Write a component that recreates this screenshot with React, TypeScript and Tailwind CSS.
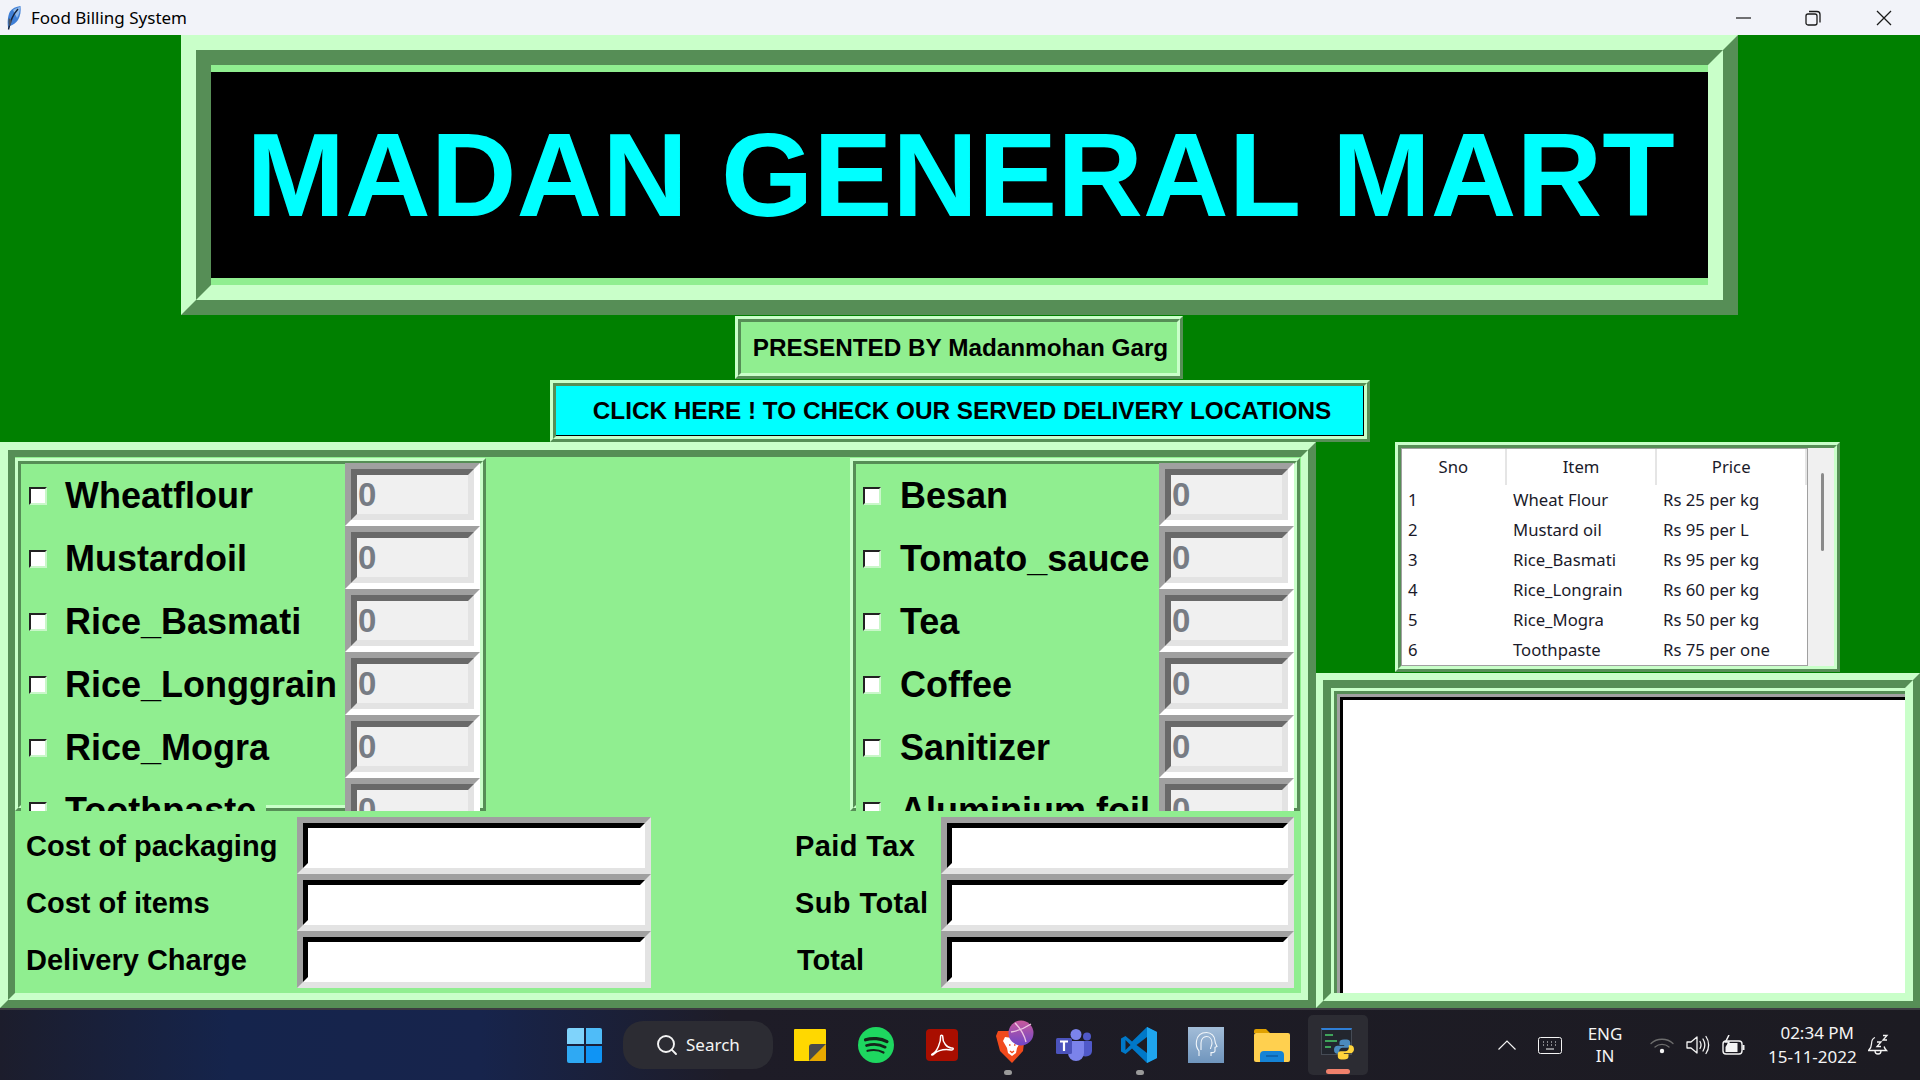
import { Search } from 'lucide-react';

const leftItems = ['Wheatflour', 'Mustardoil', 'Rice_Basmati', 'Rice_Longgrain', 'Rice_Mogra', 'Toothpaste'];
const rightItems = ['Besan', 'Tomato_sauce', 'Tea', 'Coffee', 'Sanitizer', 'Aluminium foil'];

const priceRows = [
  ['1', 'Wheat Flour', 'Rs 25 per kg'],
  ['2', 'Mustard oil', 'Rs 95 per L'],
  ['3', 'Rice_Basmati', 'Rs 95 per kg'],
  ['4', 'Rice_Longrain', 'Rs 60 per kg'],
  ['5', 'Rice_Mogra', 'Rs 50 per kg'],
  ['6', 'Toothpaste', 'Rs 75 per one'],
];

const uiFont = 'font-["Noto_Sans","Open_Sans",sans-serif]';

// Tk "ridge" relief: light then dark on the top/left, the other way round on the bottom/right
function ThinRidge({ className = '', children }: { className?: string; children?: React.ReactNode }) {
  return (
    <div className={`border-[3px] border-t-[#c9ffc9] border-l-[#c9ffc9] border-b-[#568e56] border-r-[#568e56] ${className}`}>
      <div className="h-full w-full border-[3px] border-t-[#568e56] border-l-[#568e56] border-b-[#c9ffc9] border-r-[#c9ffc9]">
        {children}
      </div>
    </div>
  );
}

function ItemEntry() {
  return (
    <div className="ml-auto h-[63px] w-[135px] shrink-0 border-[6px] border-t-[#a0a0a0] border-l-[#a0a0a0] border-b-white border-r-white">
      <div className="h-full border-[6px] border-t-[#696969] border-l-[#696969] border-b-[#e3e3e3] border-r-[#e3e3e3] bg-[#f0f0f0] pl-[1px] text-[33px] leading-[40px] font-bold text-[#777c84]">
        0
      </div>
    </div>
  );
}

function ItemRow({ label, check }: { label: string; check: string }) {
  return (
    <div className="flex h-[63px] items-start">
      <div className={`mt-[2px] flex h-[61px] min-w-0 items-center bg-[#90ee90] pr-[10px] ${check}`}>
        <div className="h-[18px] w-[18px] shrink-0 border-2 border-t-[#222222] border-l-[#222222] border-b-[#c9f7c9] border-r-[#c9f7c9] bg-white" />
        <span className="text-[36px] font-bold leading-none whitespace-nowrap text-black">{label}</span>
      </div>
      <ItemEntry />
    </div>
  );
}

function ItemFrame({ items, width, rowWidth, check }: { items: string[]; width: string; rowWidth: string; check: string }) {
  return (
    <div className={`relative h-[353px] overflow-hidden ${width}`}>
      <ThinRidge className="absolute inset-0" />
      <div className={`relative pt-[5px] pl-[6px] ${rowWidth}`}>
        {items.map((item) => (
          <ItemRow key={item} label={item} check={check} />
        ))}
      </div>
    </div>
  );
}

function TotalEntry({ width }: { width: string }) {
  return (
    <div className={`h-[57px] shrink-0 border-[6px] border-t-[#a0a0a0] border-l-[#a0a0a0] border-b-[#e3e3e3] border-r-[#e3e3e3] ${width}`}>
      <div className="h-full border-[5px] border-t-black border-l-black border-b-white border-r-white bg-white" />
    </div>
  );
}

function TotalRow({ left, right, rightClass }: { left: string; right: string; rightClass: string }) {
  return (
    <div className="flex h-[57px] items-center text-[29px] font-bold text-black">
      <div className="w-[282px] shrink-0 pt-[2px] pl-[11px]">{left}</div>
      <TotalEntry width="w-[354px]" />
      <div className="w-[145px] shrink-0" />
      <div className={`shrink-0 pt-[2px] ${rightClass}`}>{right}</div>
      <TotalEntry width="w-[353px]" />
    </div>
  );
}

function TitleBar() {
  return (
    <div className={`flex h-[35px] shrink-0 items-center bg-[#f2f3f9] text-black ${uiFont}`}>
      <svg viewBox="0 0 14 24" className="ml-[7px] h-[24px] w-[14px]">
        <path d="M1.500 23.500 C0 18 0.500 10 3 5.500 C5 2.500 9 0.500 13.500 0 C14 5 13.500 10 11 14 C9 17 6 19 3 20 Z" fill="#3f7fd6" />
        <path d="M6 4 C8 2.500 10.500 1.500 13 1 C13 5 12 9 10 12 Z" fill="#8fb8ea" />
        <path d="M1.500 23.500 C3 16 5.500 9 11 3" stroke="#16223c" strokeWidth="1.400" fill="none" />
        <path d="M3 20 C1.500 20.500 1 16 1.800 12 L5 15 Z" fill="#4a5668" />
      </svg>
      <span className="ml-[10px] text-[17px]">Food Billing System</span>
      <div className="ml-auto flex items-center">
        <svg viewBox="0 0 15 15" className="mr-[54px] h-[15px] w-[15px]">
          <path d="M0 8h15" stroke="#1a1a1a" strokeWidth="1.200" />
        </svg>
        <svg viewBox="0 0 16 16" className="mr-[55px] h-[16px] w-[16px]" fill="none" stroke="#1a1a1a" strokeWidth="1.300">
          <rect x="1" y="4" width="11" height="11" rx="2" />
          <path d="M4 1.500h8a3 3 0 0 1 3 3v8" />
        </svg>
        <svg viewBox="0 0 16 16" className="mr-[28px] h-[16px] w-[16px]" stroke="#1a1a1a" strokeWidth="1.300">
          <path d="M1 1l14 14M15 1L1 15" />
        </svg>
      </div>
    </div>
  );
}

function WindowsLogo() {
  return (
    <div className="grid h-[35px] w-[35px] grid-cols-2 gap-[2px]">
      <div className="rounded-tl-[2px] bg-[#7fd3fb]" />
      <div className="rounded-tr-[2px] bg-[#4fbcf8]" />
      <div className="rounded-bl-[2px] bg-[#2fa9f3]" />
      <div className="rounded-br-[2px] bg-[#0f94f5]" />
    </div>
  );
}

function StickyIcon() {
  return (
    <svg viewBox="0 0 32 32" className="h-[32px] w-[32px]">
      <path d="M1 0h30a1 1 0 0 1 1 1v19L20 32H1a1 1 0 0 1-1-1V1a1 1 0 0 1 1-1z" fill="#ffd800" />
      <path d="M32 15v16a1 1 0 0 1-1 1H15z" fill="#e8a900" />
      <path d="M15 32V18a3 3 0 0 1 3-3h14z" fill="#4a4a4a" />
    </svg>
  );
}

function SpotifyIcon() {
  return (
    <svg viewBox="0 0 36 36" className="h-[36px] w-[36px]">
      <circle cx="18" cy="18" r="18" fill="#1ed760" />
      <g fill="none" stroke="#14241a" strokeLinecap="round">
        <path d="M7.500 12.800C14 10.800 23 11.300 29 14.600" strokeWidth="3.200" />
        <path d="M8.500 18.500C14.500 16.800 22 17.300 27.200 20.200" strokeWidth="2.700" />
        <path d="M9.500 23.800C14.500 22.600 21 23 25.500 25.500" strokeWidth="2.200" />
      </g>
    </svg>
  );
}

function AcrobatIcon() {
  return (
    <svg viewBox="0 0 32 32" className="h-[32px] w-[32px]">
      <rect width="32" height="32" rx="4" fill="#a90e00" />
      <path d="M6.500 25C11 23 15 13 14.600 7.500C14.400 5.600 17 5.600 16.800 8C16.400 13 21 19.500 26 19C28 18.800 27.500 21.500 25 21C19 20 12 21.500 8 25C6.200 26.600 4.800 26 6.500 25Z" fill="none" stroke="#fff" strokeWidth="1.500" />
    </svg>
  );
}

function BraveIcon() {
  return (
    <div className="relative h-[44px] w-[40px]">
      <svg viewBox="0 0 36 32" className="absolute top-[11px] left-0 h-[32px] w-[36px]">
        <path d="M4 0h22l5 4-2 16-11 12L6 20 2 5z" fill="#f14a1c" />
        <path d="M11 6l7 1 6-1 3 4-4 7-1 5-4 3-4-3-1-5-4-7z" fill="#fff" />
        <path d="M15 14h1.500M20 14h1.500M16 20l2 1.500 2-1.500" stroke="#f14a1c" strokeWidth="1.400" fill="none" />
      </svg>
      <svg viewBox="0 0 26 26" className="absolute top-0 left-[14px] h-[26px] w-[26px]">
        <defs>
          <linearGradient id="braveOrb" x1="0" y1="0" x2="0" y2="1">
            <stop offset="0" stopColor="#c85a9c" />
            <stop offset="1" stopColor="#6e46c8" />
          </linearGradient>
        </defs>
        <circle cx="13" cy="13" r="12.500" fill="url(#braveOrb)" />
        <path d="M3 12C9 11 17 8 23 4M7 3c4 4 9 11 11 19" stroke="#eec6e2" strokeWidth="1.300" fill="none" />
      </svg>
    </div>
  );
}

function TeamsIcon() {
  return (
    <svg viewBox="0 0 36 32" className="h-[32px] w-[36px]">
      <circle cx="20" cy="5.500" r="5.500" fill="#7b83eb" />
      <circle cx="31" cy="7.500" r="4" fill="#5059c9" />
      <path d="M26 12h9a1 1 0 0 1 1 1v9a6 6 0 0 1-10 4z" fill="#5059c9" />
      <path d="M12 12h15a1 1 0 0 1 1 1v11a8 8 0 0 1-16 0z" fill="#7b83eb" />
      <rect x="0" y="9" width="16" height="16" rx="1.500" fill="#4b53bc" />
      <path d="M4 12.500h8M8 12.500v9.500" stroke="#fff" strokeWidth="2.200" />
    </svg>
  );
}

function VsCodeIcon() {
  return (
    <svg viewBox="0 0 36 36" className="h-[36px] w-[36px]">
      <path d="M26 0l10 5v26l-10 5-15-14.500L4.500 27 0 24.500V11.500L4.500 9l6.500 5.500z" fill="#0078c8" />
      <path d="M26 0l10 5v26l-10 5z" fill="#1fa5ee" />
      <path d="M26 10l-10.500 8L26 26z" fill="#1e1c24" />
      <path d="M4.500 13l5 5-5 5z" fill="#1e1c24" />
    </svg>
  );
}

function FaceAppIcon() {
  return (
    <div className="flex h-[36px] w-[36px] items-center justify-center bg-gradient-to-b from-[#a3bdd8] to-[#6f95bd]">
      <svg viewBox="0 0 24 28" className="h-[28px] w-[24px]" fill="none" stroke="#f2f6fa" strokeWidth="1.100">
        <path d="M5 25v-5C2.500 17 2 13 2.500 10 3.500 4 8 1.500 12.500 1.500S21 5 21 10c0 2 1 3.500 2 5.500l-2 .8v3.500c0 1.500-1.500 2-4 1.700V25" />
        <path d="M7 19V12c0-4 2.500-6.500 5.500-6.500S18 8 18 12c0 3-1.500 4-1.500 6" />
      </svg>
    </div>
  );
}

function FolderIcon() {
  return (
    <svg viewBox="0 0 36 33" className="h-[33px] w-[36px]">
      <path d="M0 2a2 2 0 0 1 2-2h10l4 4h-16z" fill="#e0a100" />
      <rect y="4" width="36" height="29" rx="2" fill="#ffd04f" />
      <path d="M6 33v-7a4 4 0 0 1 4-4h16a4 4 0 0 1 4 4v7z" fill="#1583d6" />
      <path d="M12 27h12" stroke="#0c5fa8" strokeWidth="1.600" />
    </svg>
  );
}

function PythonWindowIcon() {
  const snake = 'M11.900 2C9 2 7.500 3 7.500 5v2.500h4.700v.8H5.500C3.500 8.300 2 9.800 2 12.200s1.400 4 3.400 4h1.800v-2.500c0-2 1.600-3.500 3.500-3.500h4.600c1.600 0 2.900-1.300 2.900-2.900V5c0-1.700-1.600-3-3.400-3z';
  return (
    <div className="relative h-[34px] w-[35px]">
      <div className="absolute top-0 left-0 h-[27px] w-[31px] border border-t-2 border-[#454b55] border-t-[#2f7fd6] bg-[#22262e]">
        <div className="mt-[4px] ml-[3px] h-[2px] w-[8px] bg-[#3fa35a]" />
        <div className="mt-[4px] ml-[3px] h-[2px] w-[12px] bg-[#3fa35a]" />
        <div className="mt-[4px] ml-[3px] h-[2px] w-[6px] bg-[#3fa35a]" />
      </div>
      <svg viewBox="0 0 24 24" className="absolute top-[9px] left-[11px] h-[25px] w-[24px]">
        <path d={snake} fill="#4b8bbe" />
        <path d={snake} fill="#ffd43b" transform="rotate(180 12 12)" />
      </svg>
    </div>
  );
}

function Tray() {
  return (
    <div className={`ml-auto flex h-full items-center text-[#f4f4f4] ${uiFont}`}>
      <svg viewBox="0 0 18 10" className="h-[10px] w-[18px]" fill="none" stroke="#f4f4f4" strokeWidth="1.200">
        <path d="M.5 9.500L9 1l8.500 8.500" />
      </svg>
      <svg viewBox="0 0 24 17" className="ml-[22px] h-[17px] w-[24px]" fill="none" stroke="#f4f4f4" strokeWidth="1">
        <rect x="0.500" y="0.500" width="23" height="16" rx="2" />
        <path d="M5 5h1M9 5h1M13 5h1M17 5h1M5 8h1M9 8h1M13 8h1M17 8h1M8 12h8" />
      </svg>
      <div className="ml-[24px] w-[38px] text-center text-[17px] leading-[22px]">
        <div>ENG</div>
        <div>IN</div>
      </div>
      <svg viewBox="0 0 24 17" className="ml-[26px] h-[17px] w-[24px]" fill="none" strokeLinecap="round">
        <path d="M1 6.500C7 .8 17 .8 23 6.500" stroke="#6d6d6d" strokeWidth="1.300" />
        <path d="M5 10c4-3.500 10-3.500 14 0" stroke="#6d6d6d" strokeWidth="1.300" />
        <circle cx="12" cy="14" r="2.200" fill="#f4f4f4" />
      </svg>
      <svg viewBox="0 0 24 20" className="ml-[12px] h-[20px] w-[24px]" fill="none" stroke="#f4f4f4" strokeWidth="1.300" strokeLinecap="round">
        <path d="M1 7h4l6-5v16l-6-5H1z" strokeLinejoin="round" />
        <path d="M14 6.500c1.300 2.200 1.300 4.800 0 7M17 4c2.300 3.800 2.300 8.200 0 12M20 1.500c3.500 5 3.500 12 0 17" />
      </svg>
      <svg viewBox="0 0 24 21" className="ml-[12px] h-[21px] w-[24px]" fill="none" stroke="#f4f4f4" strokeWidth="1.400">
        <rect x="1" y="6" width="19" height="13" rx="3" />
        <path d="M21.500 10v5" strokeWidth="2" />
        <path d="M6 8h9.500v9H3.500V12z" fill="#f4f4f4" stroke="none" />
        <path d="M7 0L3.500 7H7l-2 5" strokeWidth="1.500" />
      </svg>
      <div className="ml-[22px] w-[86px] text-right text-[17px] leading-[24px]">
        <div>02:34 PM</div>
        <div className="whitespace-nowrap">15-11-2022</div>
      </div>
      <svg viewBox="0 0 21 22" className="mr-[31px] ml-[14px] h-[22px] w-[21px]" fill="none" stroke="#f4f4f4" strokeWidth="1.300">
        <path d="M7 3.500C4 4.500 3.500 7 3.500 10c0 3-1.500 5-3 6.500h18c-1-1-2-2-2.400-4M7 17c0 4 6 4 6 0" />
        <path d="M9 8h4l-4 4.500h4M15 1.500h4l-4 4.500h4" />
      </svg>
    </div>
  );
}

function Taskbar() {
  return (
    <div className="flex h-[72px] shrink-0 items-center border-t-2 border-t-[#3b3b40] bg-[linear-gradient(90deg,#1c1d2c_0%,#15244c_12%,#17244c_25%,#1e1c27_38%,#1c1b22_100%)]">
      <div className="ml-[567px]">
        <WindowsLogo />
      </div>
      <div className={`ml-[21px] flex h-[48px] w-[150px] items-center rounded-[20px] bg-[#2c2c33] pl-[32px] text-[17px] text-[#f4f4f4] ${uiFont}`}>
        <Search className="h-[24px] w-[24px]" strokeWidth={1.900} />
        <span className="ml-[7px]">Search</span>
      </div>
      <div className="ml-[21px]"><StickyIcon /></div>
      <div className="ml-[32px]"><SpotifyIcon /></div>
      <div className="ml-[32px]"><AcrobatIcon /></div>
      <div className="relative ml-[36px] -mt-[7px]">
        <BraveIcon />
        <div className="absolute top-[50px] left-[10px] h-[5px] w-[8px] rounded-full bg-[#9a9a9a]" />
      </div>
      <div className="ml-[22px]"><TeamsIcon /></div>
      <div className="relative ml-[29px]">
        <VsCodeIcon />
        <div className="absolute top-[43px] left-[15px] h-[5px] w-[8px] rounded-full bg-[#9a9a9a]" />
      </div>
      <div className="ml-[31px]"><FaceAppIcon /></div>
      <div className="ml-[30px]"><FolderIcon /></div>
      <div className="relative ml-[18px] flex h-[60px] w-[60px] items-center justify-center rounded-[5px] bg-[#2c2c33]">
        <PythonWindowIcon />
        <div className="absolute bottom-[1px] left-[18px] h-[5px] w-[24px] rounded-full bg-[#f0816c]" />
      </div>
      <Tray />
    </div>
  );
}

function PriceList() {
  return (
    <div className={`ml-[79px] h-[230px] w-[445px] shrink-0 ${uiFont}`}>
      <ThinRidge className="h-full w-full">
        <div className="flex h-full">
          <div className="h-full w-[407px] overflow-hidden border border-[#a0a0a0] bg-white text-[16.700px] text-[#1a1a2a]">
            <div className="flex h-[36px] text-center">
              <div className="w-[105px] border-r-2 border-r-[#e5e5e5] leading-[36px]">Sno</div>
              <div className="w-[151px] border-r-2 border-r-[#e5e5e5] leading-[36px]">Item</div>
              <div className="w-[150px] border-r-2 border-r-[#e5e5e5] leading-[36px]">Price</div>
            </div>
            {priceRows.map((row) => (
              <div key={row[0]} className="flex h-[30px] items-center whitespace-nowrap">
                <div className="w-[111px] pl-[6px]">{row[0]}</div>
                <div className="w-[150px]">{row[1]}</div>
                <div>{row[2]}</div>
              </div>
            ))}
          </div>
          <div className="flex-1 bg-[#f0f0f0] pt-[25px] pl-[13px]">
            <div className="h-[78px] w-[3px] rounded-full bg-[#8a8a8a]" />
          </div>
        </div>
      </ThinRidge>
    </div>
  );
}

export default function App() {
  return (
    <div className='flex h-[1080px] w-[1920px] flex-col overflow-hidden font-["Liberation_Sans",Arial,sans-serif]'>
      <TitleBar />

      <div className="flex h-[973px] shrink-0 flex-col bg-[#008000]">
        {/* Shop name banner */}
        <div className="ml-[181px] h-[280px] w-[1557px] shrink-0 border-[15px] border-t-[#c9ffc9] border-l-[#c9ffc9] border-b-[#568e56] border-r-[#568e56]">
          <div className="h-full border-[15px] border-t-[#568e56] border-l-[#568e56] border-b-[#c9ffc9] border-r-[#c9ffc9] bg-[#90ee90] py-[7px]">
            <div className="flex h-full items-center justify-center bg-black pl-[2px] text-[118.700px] font-bold whitespace-nowrap text-[#00ffff]">
              MADAN GENERAL MART
            </div>
          </div>
        </div>

        <ThinRidge className="mt-px ml-[735px] h-[63px] w-[448px] shrink-0">
          <div className="flex h-full items-center justify-center bg-[#90ee90] pt-[2px] pl-[3px] text-[24.300px] font-bold text-black">
            PRESENTED BY Madanmohan Garg
          </div>
        </ThinRidge>

        <ThinRidge className="mt-px ml-[550px] h-[62px] w-[820px] shrink-0">
          <div className="flex h-full items-center justify-center border-r border-b border-r-black border-b-black bg-[#00ffff] pt-[2px] pl-[5px] text-[24.300px] font-bold text-black">
            CLICK HERE ! TO CHECK OUR SERVED DELIVERY LOCATIONS
          </div>
        </ThinRidge>

        <div className="flex h-[566px] shrink-0">
          {/* Item entry and totals panel */}
          <div className="h-full w-[1316px] shrink-0 border-[8px] border-t-[#c9ffc9] border-l-[#c9ffc9] border-b-[#568e56] border-r-[#568e56]">
            <div className="h-full border-[7px] border-t-[#568e56] border-l-[#568e56] border-b-[#c9ffc9] border-r-[#c9ffc9] bg-[#90ee90]">
              <div className="flex justify-between pt-px pr-px">
                <ItemFrame items={leftItems} width="w-[471px]" rowWidth="w-[465px]" check="gap-[18px] pl-[8px]" />
                <ItemFrame items={rightItems} width="w-[450px]" rowWidth="w-[444px]" check="gap-[19px] pl-[7px]" />
              </div>
              <div className="pt-[6px]">
                <TotalRow left="Cost of packaging" right="Paid Tax" rightClass="-ml-[1px] w-[146px] tracking-[0.4px]" />
                <TotalRow left="Cost of items" right="Sub Total" rightClass="-ml-[1px] w-[146px] tracking-[0.4px]" />
                <TotalRow left="Delivery Charge" right="Total" rightClass="w-[145px] pl-px" />
              </div>
            </div>
          </div>

          <div className="flex min-w-0 flex-1 flex-col">
            <PriceList />
            {/* Bill area */}
            <div className="mt-px h-[335px] min-w-0 shrink-0 border-[7px] border-t-[#c9ffc9] border-l-[#c9ffc9] border-b-[#568e56] border-r-[#568e56]">
              <div className="h-full overflow-hidden border-[8px] border-t-[#568e56] border-l-[#568e56] border-b-[#c9ffc9] border-r-[#c9ffc9]">
                <div className="h-[340px] w-[600px] border-t-[3px] border-l-[3px] border-t-[#c9ffc9] border-l-[#c9ffc9]">
                  <div className="h-full border-t-[3px] border-l-[3px] border-t-[#568e56] border-l-[#568e56]">
                    <div className="h-full border-t-[3px] border-l-[3px] border-t-[#a0a0a0] border-l-[#a0a0a0]">
                      <div className="h-full border-t-[3px] border-l-[3px] border-t-black border-l-black bg-white" />
                    </div>
                  </div>
                </div>
              </div>
            </div>
          </div>
        </div>
      </div>

      <Taskbar />
    </div>
  );
}
